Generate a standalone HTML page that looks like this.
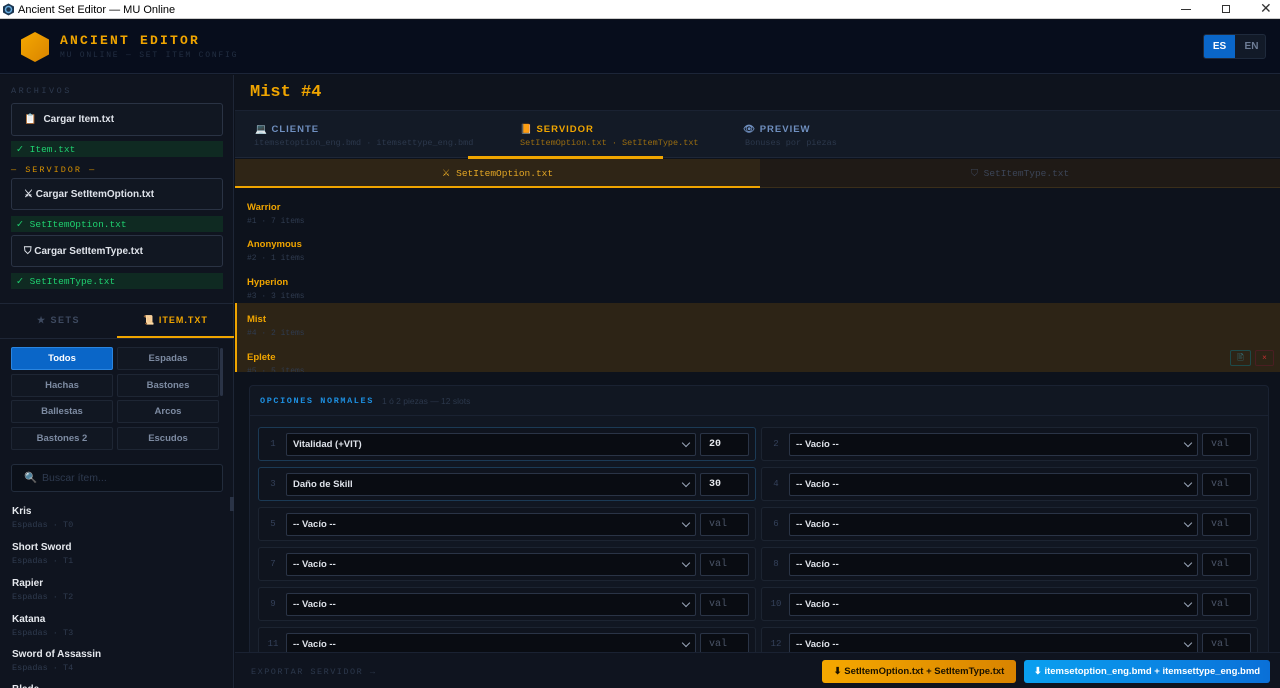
<!DOCTYPE html>
<html><head><meta charset="utf-8"><style>
*{box-sizing:border-box;margin:0;padding:0}
html,body{width:1280px;height:688px;overflow:hidden}
body{background:#0d121c;font-family:"Liberation Sans",sans-serif;position:relative;color:#d8dde6}
.a{position:absolute}
.mono{font-family:"Liberation Mono",monospace}
.btn{position:absolute;left:11px;width:212px;border:1px solid #2a3344;border-radius:3px;background:#111722;font-size:10px;font-weight:bold;color:#dfe3ea;display:flex;align-items:center;padding-left:12px;gap:7px}
.ok{position:absolute;left:11px;width:212px;height:16px;background:#0f2a22;color:#1fcf6f;font-family:"Liberation Mono",monospace;font-size:9.5px;padding-left:5px;line-height:17px}
.cat{position:absolute;width:102px;height:23px;border:1px solid #1e2634;border-radius:2px;background:#111722;color:#7d8ba2;font-size:9.5px;font-weight:bold;text-align:center;line-height:21px}
.it{position:absolute;left:12px}
.it b{display:block;font-size:10px;color:#e6e9ee}
.it span{display:block;font-family:"Liberation Mono",monospace;font-size:8.5px;color:#2f3b4f;margin-top:3px}
.set{position:absolute;left:235px;width:1045px;height:37px;padding:10px 0 0 12px}
.set b{display:block;font-size:9.5px;color:#f0a500}
.set span{display:block;font-family:"Liberation Mono",monospace;font-size:8px;color:#2f3b4f;margin-top:4px}
.row{position:absolute;height:34px;border:1px solid #1c2431;border-radius:3px;background:#0f141e}
.row.h{border-color:#1b3a55}
.row .n{position:absolute;left:0;width:28px;top:0;line-height:32px;text-align:center;font-family:"Liberation Mono",monospace;font-size:9px;color:#34415a}
.row .s{position:absolute;left:27px;top:5px;height:23px;border:1px solid #2a3446;border-radius:2px;background:#090c12;font-size:9.5px;font-weight:bold;color:#dfe3ea;line-height:21px;padding-left:6px}
.row .s:after{content:"";position:absolute;right:6px;top:6px;width:5px;height:5px;border-right:1.5px solid #9aa6b8;border-bottom:1.5px solid #9aa6b8;transform:rotate(45deg)}
.row .v{position:absolute;top:5px;width:49px;height:23px;border:1px solid #2a3446;border-radius:2px;background:#090c12;font-family:"Liberation Mono",monospace;font-size:10px;line-height:22px;padding-left:8px;color:#4b5568}
</style></head><body>
<div class="a" style="left:0;top:0;width:1280px;height:19px;background:#fff;border-bottom:1px solid #ccc"></div>
<svg class="a" style="left:2px;top:3px" width="13" height="13" viewBox="0 0 13 13"><polygon points="6.5,0.5 12,3.5 12,9.5 6.5,12.5 1,9.5 1,3.5" fill="#1a3550"/><circle cx="6.5" cy="6.5" r="3" fill="none" stroke="#6ad" stroke-width="1.5"/></svg>
<div class="a" style="left:18px;top:4px;font-size:11px;color:#000">Ancient Set Editor — MU Online</div>
<div class="a" style="left:1181px;top:9px;width:10px;height:1px;background:#333"></div>
<div class="a" style="left:1222px;top:5px;width:8px;height:8px;border:1px solid #333"></div>
<div class="a" style="left:1260px;top:0;font-size:14px;color:#333">✕</div>
<div class="a" style="left:0;top:20px;width:1280px;height:54px;background:#070d1c;border-bottom:1px solid #1c2538"></div>
<svg class="a" style="left:19px;top:31px" width="32" height="32" viewBox="0 0 32 32"><defs><linearGradient id="g" x1="0" y1="0" x2="1" y2="1"><stop offset="0" stop-color="#f5a800"/><stop offset="1" stop-color="#d98400"/></linearGradient></defs><polygon points="16,1 30,8.5 30,23.5 16,31 2,23.5 2,8.5" fill="url(#g)"/></svg>
<div class="a mono" style="left:60px;top:33px;font-size:13px;font-weight:bold;letter-spacing:2.2px;color:#f0a500">ANCIENT EDITOR</div>
<div class="a mono" style="left:60px;top:51px;font-size:8px;letter-spacing:1.8px;color:#222e42">MU ONLINE — SET ITEM CONFIG</div>
<div class="a" style="left:1203px;top:34px;width:63px;height:25px;border:1px solid #1f2a3c;border-radius:3px;background:#121a28;overflow:hidden">
<div class="a" style="left:0;top:0;width:31px;height:25px;background:#0a66c8;color:#fff;font-size:10px;font-weight:bold;text-align:center;line-height:24px">ES</div>
<div class="a" style="left:32px;top:0;width:31px;height:25px;color:#6e7d96;font-size:10px;font-weight:bold;text-align:center;line-height:24px">EN</div></div>
<div class="a" style="left:0;top:75px;width:234px;height:613px;background:#0f141f;border-right:1px solid #1e2636"></div>
<div class="a mono" style="left:11px;top:86px;font-size:8.5px;letter-spacing:2.5px;color:#2e3a4f">ARCHIVOS</div>
<div class="btn" style="top:103px;height:33px"><span style="color:#e8d4b0">📋</span>Cargar Item.txt</div>
<div class="ok" style="top:141px">✓ Item.txt</div>
<div class="a mono" style="left:11px;top:165px;font-size:8.5px;letter-spacing:2px;color:#d48f00">— SERVIDOR —</div>
<div class="btn" style="top:178px;height:32px">⚔ Cargar SetItemOption.txt</div>
<div class="ok" style="top:216px">✓ SetItemOption.txt</div>
<div class="btn" style="top:235px;height:32px">⛉ Cargar SetItemType.txt</div>
<div class="ok" style="top:273px">✓ SetItemType.txt</div>
<div class="a" style="left:0;top:303px;width:234px;height:1px;background:#1e2636"></div>
<div class="a" style="left:0;top:315px;width:117px;text-align:center;font-size:9px;font-weight:bold;letter-spacing:1.5px;color:#3e4a60">★ SETS</div>
<div class="a" style="left:117px;top:315px;width:117px;text-align:center;font-size:9px;font-weight:bold;letter-spacing:1px;color:#f0a500">📜 ITEM.TXT</div>
<div class="a" style="left:117px;top:336px;width:117px;height:2px;background:#f0a500"></div>
<div class="a" style="left:0;top:338px;width:234px;height:1px;background:#1e2636"></div>
<div class="cat" style="left:11px;top:347px;background:#0a66c8;border-color:#2a85e0;color:#fff">Todos</div>
<div class="cat" style="left:117px;top:347px">Espadas</div>
<div class="cat" style="left:11px;top:374px">Hachas</div>
<div class="cat" style="left:117px;top:374px">Bastones</div>
<div class="cat" style="left:11px;top:400px">Ballestas</div>
<div class="cat" style="left:117px;top:400px">Arcos</div>
<div class="cat" style="left:11px;top:427px">Bastones 2</div>
<div class="cat" style="left:117px;top:427px">Escudos</div>
<div class="a" style="left:220px;top:348px;width:3px;height:48px;background:#2a3346;border-radius:2px"></div>
<div class="a" style="left:11px;top:464px;width:212px;height:28px;border:1px solid #222c3c;border-radius:3px;background:#0b1019;font-size:10.5px;color:#2e3a4f;line-height:26px;padding-left:12px">🔍 <span style="margin-left:2px">Buscar ítem...</span></div>
<div class="a" style="left:230px;top:497px;width:4px;height:14px;background:#2a3346"></div>
<div class="it" style="top:506px"><b>Kris</b><span>Espadas · T0</span></div>
<div class="it" style="top:542px"><b>Short Sword</b><span>Espadas · T1</span></div>
<div class="it" style="top:578px"><b>Rapier</b><span>Espadas · T2</span></div>
<div class="it" style="top:614px"><b>Katana</b><span>Espadas · T3</span></div>
<div class="it" style="top:649px"><b>Sword of Assassin</b><span>Espadas · T4</span></div>
<div class="it" style="top:684px"><b>Blade</b></div>
<div class="a" style="left:235px;top:75px;width:1045px;height:36px;background:#0e131d;border-bottom:1px solid #1a2232"></div>
<div class="a mono" style="left:250px;top:83px;font-size:17px;font-weight:bold;color:#f0a500">Mist #4</div>
<div class="a" style="left:235px;top:111px;width:1045px;height:47px;background:#131a26;border-bottom:1px solid #1e2738"></div>
<div class="a" style="left:255px;top:124px;font-size:9.5px;font-weight:bold;letter-spacing:1px;color:#6f8fbf">💻 CLIENTE</div>
<div class="a mono" style="left:254px;top:138px;font-size:8.5px;color:#2c384c">itemsetoption_eng.bmd · itemsettype_eng.bmd</div>
<div class="a" style="left:520px;top:124px;font-size:9.5px;font-weight:bold;letter-spacing:1px;color:#f0a500">📙 SERVIDOR</div>
<div class="a mono" style="left:520px;top:138px;font-size:8.5px;color:#9a6d10">SetItemOption.txt · SetItemType.txt</div>
<div class="a" style="left:743px;top:124px;font-size:9.5px;font-weight:bold;letter-spacing:1px;color:#6f8fbf">👁 PREVIEW</div>
<div class="a mono" style="left:745px;top:138px;font-size:8.5px;color:#2c384c">Bonuses por piezas</div>
<div class="a" style="left:468px;top:156px;width:195px;height:3px;background:#f0a500"></div>
<div class="a" style="left:235px;top:159px;width:525px;height:29px;background:#2f2516;border-bottom:2px solid #f0a500"></div>
<div class="a mono" style="left:235px;top:168px;width:525px;text-align:center;font-size:9.5px;color:#e3a624">⚔ SetItemOption.txt</div>
<div class="a" style="left:760px;top:159px;width:520px;height:29px;background:#1f1a16;border-bottom:1px solid #3a2e1a"></div>
<div class="a mono" style="left:760px;top:168px;width:520px;text-align:center;font-size:9.5px;color:#3c4557">⛉ SetItemType.txt</div>
<div class="a" style="left:235px;top:189px;width:1045px;height:183px;background:#0d121c"></div>
<div class="set" style="top:192px"><b>Warrior</b><span>#1 · 7 items</span></div>
<div class="set" style="top:229px"><b>Anonymous</b><span>#2 · 1 items</span></div>
<div class="set" style="top:267px"><b>Hyperion</b><span>#3 · 3 items</span></div>
<div class="a" style="left:235px;top:303px;width:1045px;height:69px;background:#2d2416;border-left:2px solid #f0a500"></div>
<div class="set" style="top:304px"><b>Mist</b><span>#4 · 2 items</span></div>
<div class="set" style="top:342px;height:30px;overflow:hidden"><b>Eplete</b><span>#5 · 5 items</span></div>
<div class="a" style="left:1230px;top:350px;width:21px;height:16px;border:1px solid #1e4a4a;border-radius:2px;color:#3a8a9a;font-size:8px;text-align:center;line-height:14px">🖹</div>
<div class="a" style="left:1255px;top:350px;width:19px;height:16px;border:1px solid #4a1e22;border-radius:2px;color:#c03030;font-size:8px;text-align:center;line-height:14px">×</div>
<div class="a" style="left:235px;top:372px;width:1045px;height:280px;background:#0d121c"></div>
<div class="a" style="left:249px;top:385px;width:1020px;height:280px;border:1px solid #1a2232;border-radius:4px;background:#111722"></div>
<div class="a" style="left:250px;top:386px;width:1018px;height:30px;border-bottom:1px solid #1a2232"></div>
<div class="a mono" style="left:260px;top:396px;font-size:8.5px;font-weight:bold;letter-spacing:1.6px;color:#1d8fe0">OPCIONES NORMALES</div>
<div class="a" style="left:382px;top:396px;font-size:8.5px;color:#2c384c">1 ó 2 piezas — 12 slots</div>

<div class="row h" style="left:258px;top:427px;width:498px"><div class="n">1</div><div class="s" style="width:410px">Vitalidad (+VIT)</div><div class="v" style="left:441px;color:#e6e9ee;font-weight:bold">20</div></div>
<div class="row" style="left:761px;top:427px;width:497px"><div class="n">2</div><div class="s" style="width:409px">-- Vacío --</div><div class="v" style="left:440px">val</div></div>
<div class="row h" style="left:258px;top:467px;width:498px"><div class="n">3</div><div class="s" style="width:410px">Daño de Skill</div><div class="v" style="left:441px;color:#e6e9ee;font-weight:bold">30</div></div>
<div class="row" style="left:761px;top:467px;width:497px"><div class="n">4</div><div class="s" style="width:409px">-- Vacío --</div><div class="v" style="left:440px">val</div></div>
<div class="row" style="left:258px;top:507px;width:498px"><div class="n">5</div><div class="s" style="width:410px">-- Vacío --</div><div class="v" style="left:441px">val</div></div>
<div class="row" style="left:761px;top:507px;width:497px"><div class="n">6</div><div class="s" style="width:409px">-- Vacío --</div><div class="v" style="left:440px">val</div></div>
<div class="row" style="left:258px;top:547px;width:498px"><div class="n">7</div><div class="s" style="width:410px">-- Vacío --</div><div class="v" style="left:441px">val</div></div>
<div class="row" style="left:761px;top:547px;width:497px"><div class="n">8</div><div class="s" style="width:409px">-- Vacío --</div><div class="v" style="left:440px">val</div></div>
<div class="row" style="left:258px;top:587px;width:498px"><div class="n">9</div><div class="s" style="width:410px">-- Vacío --</div><div class="v" style="left:441px">val</div></div>
<div class="row" style="left:761px;top:587px;width:497px"><div class="n">10</div><div class="s" style="width:409px">-- Vacío --</div><div class="v" style="left:440px">val</div></div>
<div class="row" style="left:258px;top:627px;width:498px"><div class="n">11</div><div class="s" style="width:410px">-- Vacío --</div><div class="v" style="left:441px">val</div></div>
<div class="row" style="left:761px;top:627px;width:497px"><div class="n">12</div><div class="s" style="width:409px">-- Vacío --</div><div class="v" style="left:440px">val</div></div>
<div class="a" style="left:235px;top:652px;width:1045px;height:36px;background:#0f141f;border-top:1px solid #1a2232"></div>
<div class="a mono" style="left:251px;top:667px;font-size:8.5px;letter-spacing:1.5px;color:#2c384c">EXPORTAR SERVIDOR →</div>
<div class="a" style="left:822px;top:660px;width:194px;height:23px;border-radius:3px;background:linear-gradient(90deg,#f5a800,#d98400);color:#1a1200;font-size:9.5px;font-weight:bold;text-align:center;line-height:23px">⬇ SetItemOption.txt + SetItemType.txt</div>
<div class="a" style="left:1024px;top:660px;width:246px;height:23px;border-radius:3px;background:linear-gradient(90deg,#0aa0f0,#0a70d8);color:#fff;font-size:9.5px;font-weight:bold;text-align:center;line-height:23px">⬇ itemsetoption_eng.bmd + itemsettype_eng.bmd</div>
</body></html>
